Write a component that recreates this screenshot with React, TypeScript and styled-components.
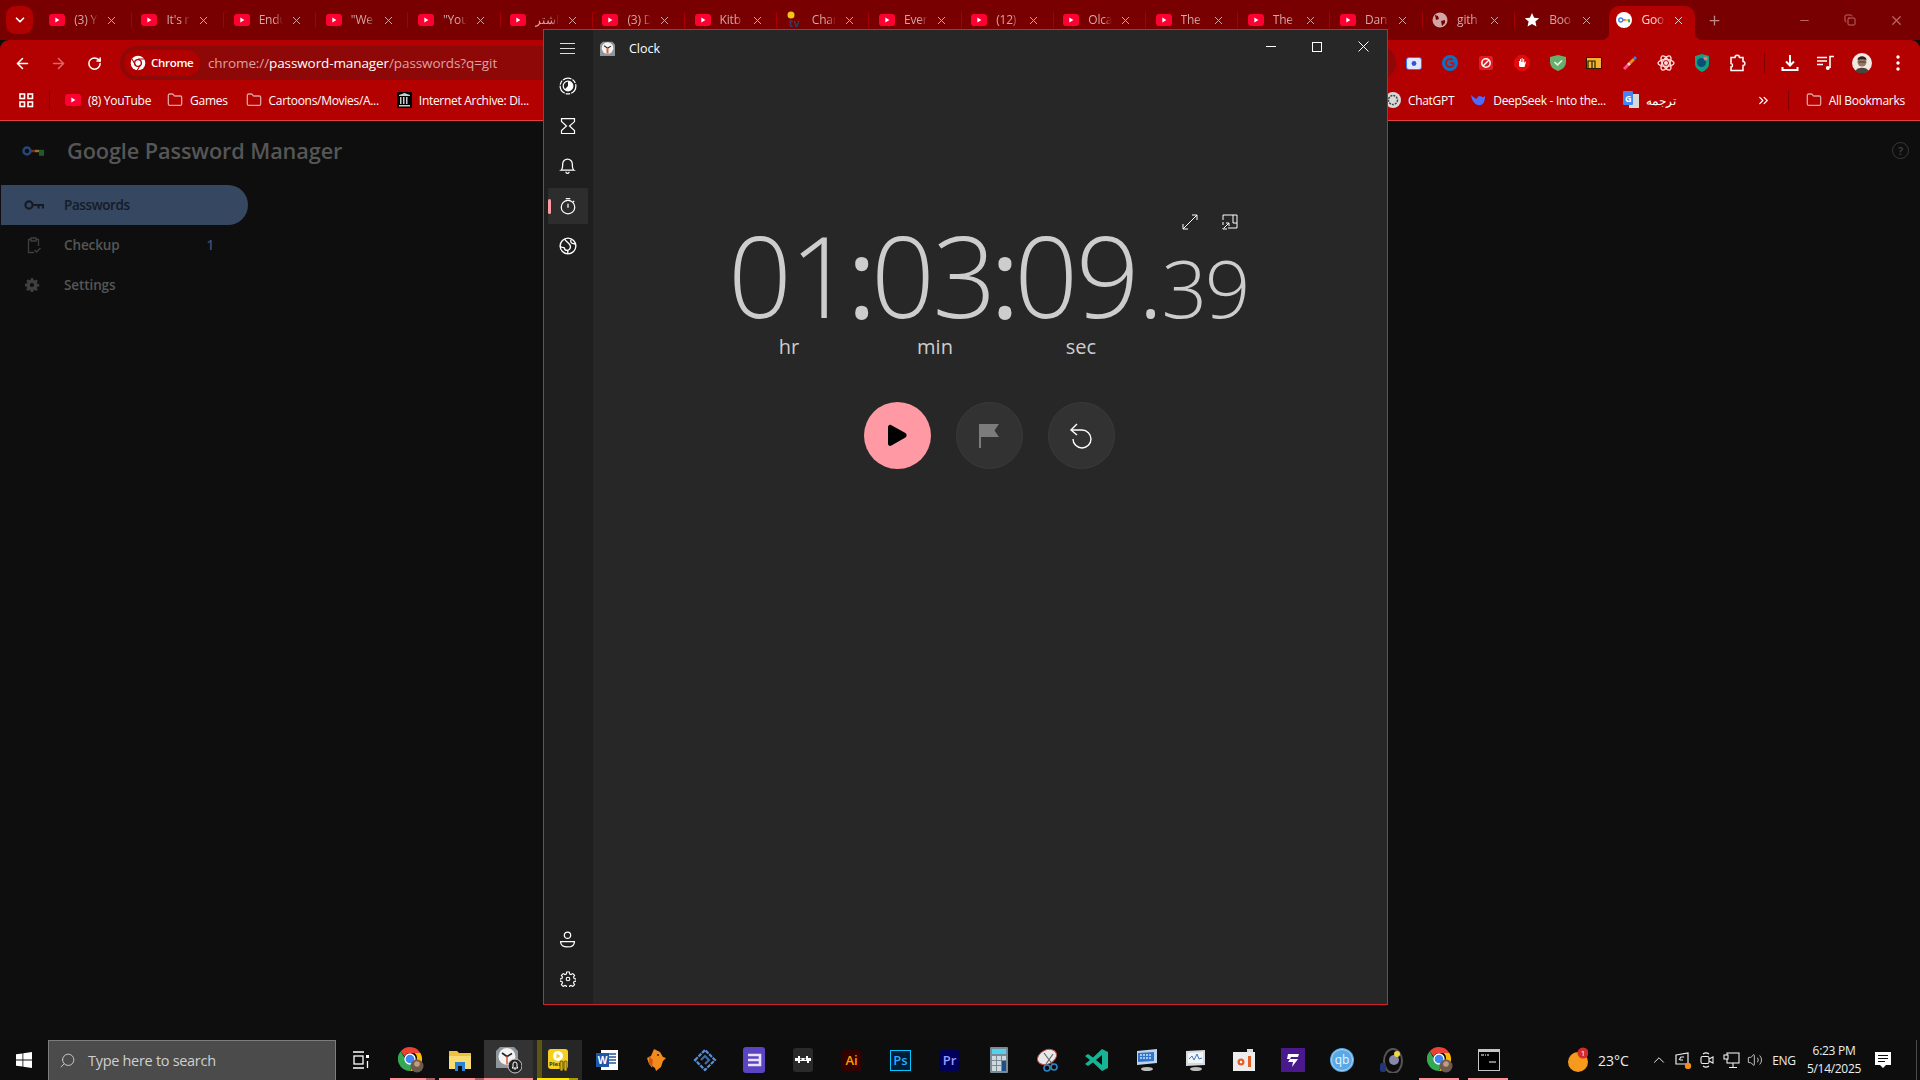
import React from "react";
import styled, { createGlobalStyle } from "styled-components";
import { ArrowLeft, ArrowRight, RotateCw, Folder, Search, ChevronDown, ChevronUp, X, Plus, Minus, Copy, ChevronsRight, Volume2 } from "lucide-react";

const Global = createGlobalStyle`
  html, body { margin: 0; padding: 0; background: #0e0e0e; }
  * { box-sizing: border-box; }
  body { font-family: "Open Sans", "Noto Sans", sans-serif; overflow: hidden; }
`;

const Screen = styled.div`
  position: relative; width: 1920px; height: 1080px; display: flex; flex-direction: column; overflow: hidden; background: #0e0e0e;
`;
const TabStrip = styled.div`
  height: 40px; background: #780000; display: flex; align-items: flex-end; flex: none;
`;
const TabMenu = styled.div`
  width: 27px; height: 28px; margin: 0 6.2px 6px 6px; background: #b00000; border-radius: 9px; display: flex; align-items: center; justify-content: center; color: #fff;
`;
const Tab = styled.div<{ $active?: boolean; $sep?: boolean }>`
  position: relative; width: 86px; height: 34px; margin: 0 3.1px; padding: 0 10px 6px 7px; display: flex; align-items: center; flex: none;
  border-radius: 10px 10px 0 0; background: ${p => (p.$active ? "#b30000" : "transparent")};
  color: ${p => (p.$active ? "#f3dcdc" : "#d3a6a6")};
  &::after {
    content: ""; display: ${p => (p.$sep ? "block" : "none")}; position: absolute; right: -3.6px; top: 6px; width: 1px; height: 16px; background: #a80000;
  }
`;
const TabFoot = styled.span<{ $right?: boolean }>`
  position: absolute; bottom: 0; width: 8px; height: 8px; ${p => (p.$right ? "right: -8px" : "left: -8px")};
  background: radial-gradient(circle at ${p => (p.$right ? "100% 0" : "0 0")}, #780000 8px, #b30000 8.5px);
`;
const TabTitle = styled.span`
  flex: 1; margin: 0 7px 0 9px; overflow: hidden; white-space: nowrap; font-size: 12px; line-height: 16px; letter-spacing: -0.2px;
  -webkit-mask-image: linear-gradient(90deg, #000 65%, transparent 100%); mask-image: linear-gradient(90deg, #000 65%, transparent 100%);
`;
const NewTab = styled.div`
  width: 32px; height: 34px; padding-bottom: 6px; display: flex; align-items: center; justify-content: center; color: #c28a8a; flex: none;
`;
const WinControls = styled.div`
  margin-left: auto; margin-right: 1px; display: flex; height: 40px;
`;
const WinButton = styled.div`
  width: 46px; display: flex; align-items: center; justify-content: center; color: #b66;
`;
const Toolbar = styled.div`
  height: 40px; background: #b30000; border-radius: 9px 9px 0 0; display: flex; align-items: center; padding: 6px 4px 0; flex: none;
`;
const NavButton = styled.div<{ $dim?: boolean }>`
  width: 36px; height: 34px; display: flex; align-items: center; justify-content: center; color: ${p => (p.$dim ? "#d66a6a" : "#fff")}; flex: none;
`;
const Omnibox = styled.div`
  width: 1276px; height: 34px; margin-left: 8px; padding: 0 0 1px 4px; border-radius: 17px; background: #8f0808; display: flex; align-items: center; flex: none;
`;
const Chip = styled.div`
  height: 26px; width: 76px; border-radius: 13px; background: #b00000; display: flex; align-items: center; gap: 5px; padding-left: 6px; color: #fff; font-size: 11.5px; font-weight: 600; letter-spacing: -0.3px;
`;
const Url = styled.div`
  margin-left: 8px; font-size: 13.5px; color: #dca3a3; letter-spacing: -0.1px; white-space: nowrap;
  b { font-weight: 400; color: #fff; }
`;
const ExtButton = styled.div`
  width: 36px; height: 34px; display: flex; align-items: center; justify-content: center; flex: none;
`;
const ToolSep = styled.div`
  width: 16px; display: flex; justify-content: center; flex: none;
  &::before { content: ""; width: 1px; height: 20px; background: #7f0000; }
`;
const Bookmarks = styled.div`
  height: 41px; background: #b30000; border-bottom: 1px solid #e04040; display: flex; align-items: center; padding-left: 19px; color: #fff; font-size: 12px; flex: none; letter-spacing: -0.3px;
`;
const BarSep = styled.div<{ $space?: number }>`
  width: 1px; height: 20px; background: #7f0000; margin: 0 ${p => p.$space ?? 15}px; flex: none;
`;
const Mark = styled.div<{ $gap?: number }>`
  display: flex; align-items: center; gap: 7px; white-space: nowrap; margin-right: ${p => p.$gap ?? 18}px; flex: none; color: #fff;
`;
const FolderIcon = styled(Folder)`
  color: #dba0a0;
`;
const PageBody = styled.div`
  flex: 1; display: flex; flex-direction: column; background: #0e0e0e; min-height: 0;
`;
const PageHeader = styled.div`
  height: 59px; display: flex; align-items: center; padding: 0 11px 0 22px; flex: none;
`;
const PageTitle = styled.div`
  margin-left: 23px; color: #565656; font-size: 21.7px; font-weight: 600; letter-spacing: -0.1px;
`;
const HelpBadge = styled.div`
  margin-left: auto; width: 17px; height: 17px; border-radius: 50%; border: 1.5px solid #3a3a3a; color: #3a3a3a; font-size: 11px; font-weight: 700; display: flex; align-items: center; justify-content: center;
`;
const SideNav = styled.div`
  margin-top: 5px; display: flex; flex-direction: column; width: 248px;
`;
const NavItem = styled.div<{ $active?: boolean }>`
  height: 40px; margin-left: 1px; display: flex; align-items: center; padding-left: 23px; border-radius: 0 20px 20px 0;
  background: ${p => (p.$active ? "#354761" : "transparent")}; color: ${p => (p.$active ? "#161b24" : "#565656")};
  font-size: 13.5px; font-weight: 600; letter-spacing: ${p => (p.$active ? "-0.4px" : "-0.1px")};
`;
const NavLabel = styled.span`
  margin-left: 20px; flex: 1;
`;
const NavCount = styled.span`
  color: #3d4f75; margin-right: 34px;
`;
const Taskbar = styled.div`
  height: 40px; background: #0d0d0d; display: flex; align-items: stretch; flex: none; color: #fff;
`;
const StartButton = styled.div`
  width: 48px; display: flex; align-items: center; justify-content: center; flex: none;
`;
const SearchBox = styled.div`
  width: 288px; background: #4b4b4b; border: 1px solid #7d7d7d; border-bottom: none; display: flex; align-items: center; padding-left: 10px; color: #cfcfcf; font-size: 14.5px; flex: none; letter-spacing: -0.3px;
`;
const SearchHint = styled.span`
  margin-left: 12px;
`;
const TaskView = styled.div`
  width: 50px; display: flex; align-items: center; justify-content: center; flex: none;
`;
const AppSlot = styled.div<{ $bg?: string }>`
  position: relative; width: 49px; display: flex; align-items: center; justify-content: center; flex: none; background: ${p => p.$bg ?? "transparent"};
`;
const RunBar = styled.span<{ $color: string; $left?: number; $right?: number }>`
  position: absolute; bottom: 0; left: ${p => p.$left ?? 4}px; right: ${p => p.$right ?? 0}px; height: 2px; background: ${p => p.$color};
`;
const LeftEdge = styled.span`
  position: absolute; top: 0; bottom: 0; left: 4px; width: 5px; background: #5b5712;
`;
const Weather = styled.div`
  margin-left: 55px; width: 79px; display: flex; align-items: center; gap: 10px; font-size: 14px; flex: none; color: #eee;
`;
const TrayIcon = styled.div`
  width: 24px; display: flex; align-items: center; justify-content: center; flex: none; color: #eee;
`;
const Lang = styled.div`
  width: 34px; display: flex; align-items: center; justify-content: center; font-size: 12px; flex: none; color: #eee; letter-spacing: -0.3px;
`;
const DateTime = styled.div`
  width: 66px; display: flex; flex-direction: column; align-items: center; justify-content: center; font-size: 12px; line-height: 18px; color: #eee; flex: none; letter-spacing: -0.3px;
`;
const Notify = styled.div`
  width: 32px; display: flex; align-items: center; justify-content: center; flex: none;
`;
const DesktopPeek = styled.div`
  width: 1px; margin-left: 17px; background: #4a4a4a; flex: none;
`;

const ClockWindow = styled.div`
  position: absolute; left: 543px; top: 29px; width: 845px; height: 976px; border: 1px solid #d3212d; display: flex; background: #272727;
`;
const ClockRail = styled.div`
  width: 49px; background: #1f1f1f; display: flex; flex-direction: column; align-items: center; flex: none;
`;
const RailItem = styled.div<{ $active?: boolean; $first?: boolean; $last?: boolean }>`
  position: relative; width: 40px; height: ${p => (p.$first ? "36px" : "40px")}; margin: 0 2px ${p => (p.$last ? "5px" : "0")} 0; display: flex; align-items: center; justify-content: center; color: #fff;
  ${p => (p.$active ? "background: linear-gradient(#2d2d2d,#2d2d2d) center/100% 36px no-repeat; border-radius: 4px;" : "")}
`;
const RailMark = styled.span`
  position: absolute; left: 0; top: 13px; width: 3px; height: 15px; border-radius: 2px; background: #ff99a4;
`;
const RailSpacer = styled.div`
  flex: 1;
`;
const ClockMain = styled.div`
  flex: 1; display: flex; flex-direction: column; min-width: 0;
`;
const TitleBar = styled.div`
  height: 36px; display: flex; align-items: center; padding-left: 7px; flex: none; color: #fff; font-size: 12.5px;
`;
const TitleText = styled.span`
  margin-left: 14px;
`;
const TitleControls = styled.div`
  margin-left: auto; display: flex; margin-right: 1px; padding-bottom: 3px;
`;
const TitleBtn = styled.div`
  width: 46px; display: flex; align-items: center; justify-content: center; color: #fff;
`;
const OverlayRow = styled.div`
  margin-top: 148px; height: 17px; display: flex; justify-content: flex-end; gap: 24px; padding-right: 149px; color: #fff; flex: none;
`;
const TimeRow = styled.div`
  display: flex; align-items: baseline; padding-left: 135px; height: 88px; line-height: 88px; color: #cdcdcd; font-size: 112px; font-weight: 300; flex: none; white-space: nowrap; letter-spacing: -2.4px;
`;
const TimeSep = styled.span`
  font-weight: 400; margin: 0 -3px 0 -4px;
`;
const TimeSmall = styled.span`
  font-size: 80px; letter-spacing: -2.5px;
`;
const UnitRow = styled.div`
  display: flex; padding-left: 123px; margin-top: 14px; flex: none;
`;
const Unit = styled.div`
  width: 146px; text-align: center; color: #cdcdcd; font-size: 20px; line-height: 28px;
`;
const Controls = styled.div`
  display: flex; justify-content: center; align-items: center; gap: 25px; margin-top: 41px; padding-right: 2px; flex: none;
`;
const RoundButton = styled.div<{ $primary?: boolean; $dim?: boolean }>`
  width: 67px; height: 67px; border-radius: 50%; display: flex; align-items: center; justify-content: center;
  background: ${p => (p.$primary ? "#ff99a4" : "#323232")}; border: ${p => (p.$primary ? "none" : "1.5px solid #3a3a3a")};
  color: ${p => (p.$primary ? "#000" : p.$dim ? "#7c7c7c" : "#fff")};
`;

const YT = () => (
  <svg width="16" height="12" viewBox="0 0 16 12"><rect width="16" height="12" rx="3" fill="#ff0033" /><path d="M6.3 3.6v4.8L10.4 6z" fill="#fff" /></svg>
);
const ChromeLogo = () => (
  <svg width="16" height="16" viewBox="0 0 24 24">
    <circle cx="12" cy="12" r="11" fill="#fff" /><circle cx="12" cy="12" r="6" fill="#b00000" /><circle cx="12" cy="12" r="4" fill="#fff" /><path d="M12 6h10M8 15L3 6M15.5 15l-5 8.5" stroke="#b00000" strokeWidth="1.6" />
  </svg>
);
const KeyFav = () => (
  <svg width="16" height="16" viewBox="0 0 16 16"><circle cx="8" cy="8" r="8" fill="#fff" /><circle cx="4.8" cy="8" r="2" fill="none" stroke="#4285f4" strokeWidth="1.4" /><rect x="6.8" y="7.3" width="3" height="1.4" fill="#ea4335" /><rect x="9.8" y="7.3" width="2.2" height="1.4" fill="#fbbc05" /><rect x="12" y="7.3" width="2" height="3" fill="#34a853" /></svg>
);
const Favicon = ({ kind }: { kind: string }) => {
  if (kind === "yt") return <YT />;
  if (kind === "tv") return (
    <svg width="16" height="18" viewBox="0 0 16 18"><circle cx="4" cy="4" r="3.5" fill="#f2c318" /><text x="2" y="16" fontSize="11" fontFamily="Open Sans" fontWeight="700" fill="#2b3c5a">tv</text></svg>
  );
  if (kind === "globe") return (
    <svg width="16" height="16" viewBox="0 0 16 16"><circle cx="8" cy="8" r="7.5" fill="#d3a6a6" /><path d="M3 3l3 1 1 3-3 1zM9 9l4-1 0 3-3 3z" fill="#780000" /></svg>
  );
  if (kind === "star") return (
    <svg width="16" height="16" viewBox="0 0 24 24"><path d="M12 1.5l3.2 7 7.6.8-5.7 5.1 1.6 7.5L12 18l-6.7 3.9 1.6-7.5L1.2 9.3l7.6-.8z" fill="#fff" /></svg>
  );
  return <KeyFav />;
};

const tabs: [string, string][] = [
  ["yt", "(3) Y"], ["yt", "It's r"], ["yt", "Endu"], ["yt", "\"We"], ["yt", "\"You"], ["yt", "اشتر"], ["yt", "(3) D"], ["yt", "Kitb"], ["tv", "Char"],
  ["yt", "Ever"], ["yt", "(12)"], ["yt", "Olca"], ["yt", "The"], ["yt", "The"], ["yt", "Dan"], ["globe", "gith"], ["star", "Boo"], ["key", "Goo"],
];

const Stroke: React.FC<{ size?: number; w?: number; children: React.ReactNode }> = ({ size = 16, w = 1.2, children }) => (
  <svg width={size} height={size} viewBox="0 0 16 16" fill="none" stroke="currentColor" strokeWidth={w}>{children}</svg>
);

const exts = [
  <svg key="a" width="16" height="13" viewBox="0 0 16 13"><rect x=".5" y=".5" width="15" height="12" rx="2.5" fill="#dfe8ff" stroke="#2f7bff" /><circle cx="8" cy="6.5" r="2.4" fill="#3b4fd8" /></svg>,
  <svg key="b" width="16" height="16" viewBox="0 0 16 16"><circle cx="8" cy="8" r="8" fill="#0a72c4" /><path d="M12 8a4 4 0 1 1-1.4-3" fill="none" stroke="#c81010" strokeWidth="2" /><path d="M8 8h4" stroke="#c81010" strokeWidth="2" /></svg>,
  <svg key="c" width="14" height="14" viewBox="0 0 14 14"><rect width="14" height="14" rx="2" fill="#e11b22" /><circle cx="7" cy="7" r="4.2" fill="none" stroke="#fff" strokeWidth="1.5" /><path d="M4 10l6-6" stroke="#fff" strokeWidth="1.5" /></svg>,
  <svg key="d" width="16" height="16" viewBox="0 0 16 16"><path d="M5 0h6l5 5v6l-5 5H5l-5-5V5z" fill="#e10b0b" /><path d="M5 11V6h1V4h1v3h.6V3h1v4h.6V4h1v4l1-1.5.8.5L10.5 12H6z" fill="#fff" /></svg>,
  <svg key="e" width="16" height="16" viewBox="0 0 16 16"><path d="M8 0l8 2v5c0 4.500-3.500 7.500-8 9-4.500-1.500-8-4.500-8-9V2z" fill="#68ae6f" /><path d="M4.500 7l3 2.800L12 5.500" fill="none" stroke="#e4f5e6" strokeWidth="1.6" /></svg>,
  <svg key="f" width="16" height="12" viewBox="0 0 16 12"><rect x=".5" y=".5" width="15" height="11" fill="#f2b431" stroke="#2d1b00" /><path d="M2 11V4h7v7M6 4v7" fill="none" stroke="#2d1b00" strokeWidth="1.2" /></svg>,
  <svg key="g" width="14" height="14" viewBox="0 0 14 14" fill="none" strokeWidth="3"><path d="M1 13L5 9" stroke="#ff4f8b" /><path d="M5 9l2-2" stroke="#ffe0d0" /><path d="M7 7l4-4" stroke="#f08a24" /><path d="M11 3l2-2" stroke="#3a7bdc" /></svg>,
  <svg key="h" width="18" height="18" viewBox="0 0 18 18" fill="none" stroke="#ffd8d8" strokeWidth="1.4"><ellipse cx="9" cy="9" rx="8" ry="3.500" /><ellipse cx="9" cy="9" rx="8" ry="3.500" transform="rotate(60 9 9)" /><ellipse cx="9" cy="9" rx="8" ry="3.500" transform="rotate(120 9 9)" /><circle cx="9" cy="9" r="1.300" fill="#ffd8d8" /></svg>,
  <svg key="i" width="16" height="18" viewBox="0 0 16 18"><path d="M8 0l7 2v8c0 3.500-3 6-7 8-4-2-7-4.500-7-8V2z" fill="#12a085" /><circle cx="7.500" cy="8.500" r="4.500" fill="#0b4f78" /><circle cx="11.500" cy="4.500" r="2" fill="#ff6b6b" /></svg>,
  <svg key="j" width="18" height="18" viewBox="0 0 18 18" fill="none" stroke="#fff" strokeWidth="1.5"><path d="M2 3.500h4c0-3 4.500-3 4.500 0H14v4c2.500 0 2.500 4 0 4v5H2v-3.500c2 0 2-3.500 0-3.500z" /></svg>,
];
const tools = [
  <svg key="k" width="18" height="18" viewBox="0 0 18 18" fill="none" stroke="#fff" strokeWidth="2"><path d="M9 1v10M5 7.500L9 11.500l4-4M1.500 13v3h15v-3" /></svg>,
  <svg key="l" width="18" height="16" viewBox="0 0 18 16" fill="none" stroke="#fff" strokeWidth="1.6"><path d="M0 2.500h10M0 6h10M0 9.500h6M13 13V1.500h4" /><circle cx="10.800" cy="13" r="2" fill="#fff" stroke="none" /></svg>,
  <svg key="m" width="20" height="20" viewBox="0 0 20 20"><circle cx="10" cy="10" r="10" fill="#efe9e2" /><circle cx="10" cy="9" r="4.500" fill="#9a7860" /><path d="M3.500 18c1-4.500 12-4.500 13 0a10 10 0 0 1-13 0z" fill="#4a4440" /><path d="M5.500 7c0-5 9-5 9 0-2-1-7-1-9 0z" fill="#2a211c" /><path d="M6.500 9h7" stroke="#2a211c" strokeWidth=".8" /></svg>,
  <svg key="n" width="4" height="16" viewBox="0 0 4 16" fill="#fff"><circle cx="2" cy="2" r="1.700" /><circle cx="2" cy="8" r="1.700" /><circle cx="2" cy="14" r="1.700" /></svg>,
];

const Win = () => (
  <svg width="16" height="16" viewBox="0 0 16 16" fill="#fff"><path d="M0 2.300l6.500-.9v6.200H0zM7.300 1.300L16 0v7.600H7.300zM0 8.400h6.500v6.200L0 13.700zM7.300 8.400H16V16l-8.700-1.200z" /></svg>
);

const Glyph: React.FC<{ bg: string; fg: string; t: string; r?: number; border?: string }> = ({ bg, fg, t, r = 2, border }) => (
  <svg width="21" height="21" viewBox="0 0 21 21"><rect x=".5" y=".5" width="20" height="20" rx={r} fill={bg} stroke={border ?? bg} /><text x="10.500" y="15" textAnchor="middle" fontSize="13" fontWeight="600" fontFamily="Open Sans" fill={fg}>{t}</text></svg>
);
const TaskChrome = () => (
  <svg width="26" height="30" viewBox="0 0 26 30">
    <g transform="translate(0,2)">
      <path d="M12 0a12 12 0 0 1 10.400 6H12a6 6 0 0 0-5.400 3.400L2.700 4.300A12 12 0 0 1 12 0z" fill="#ea4335" />
      <path d="M22.400 6A12 12 0 0 1 12 24l5-8.600A6 6 0 0 0 16.500 6z" fill="#fbbc05" />
      <path d="M12 24A12 12 0 0 1 2.700 4.300L7.800 12.800A6 6 0 0 0 15 15.500z" fill="#34a853" />
      <circle cx="12" cy="12" r="5" fill="#4285f4" stroke="#fff" strokeWidth="1.300" />
    </g>
    <circle cx="19" cy="21" r="6.500" fill="#6d5b4e" /><circle cx="19" cy="19" r="2.800" fill="#c49b7e" />
  </svg>
);

function ClockFace({ badge, small }: { badge?: boolean; small?: boolean }) {
  return (
    <svg width={small ? 15 : 26} height={small ? 15 : 28} viewBox={small ? "0 0 22 22" : "0 0 26 28"}>
      <path d="M4 1h14l4 4v17H0V5z" fill="#8e959b" />
      <circle cx="11" cy="10.500" r="8.500" fill="#f3f3f3" />
      <path d="M11 10.500L6 7M11 10.500l5-3" stroke="#222" strokeWidth="1.600" />
      <path d="M11 10.500v8" stroke="#d8623a" strokeWidth={small ? 3 : 1.6} />
      {badge && <g><circle cx="19" cy="20" r="7" fill="#222" stroke="#ccc" /><path d="M16 22h6l-1-1v-3a2 2 0 0 0-4 0v3zM18 23h2" fill="none" stroke="#fff" /></g>}
    </svg>
  );
}

const pinkRun = "linear-gradient(90deg,#ff8f9b 80%,#a86069 80%)";
const apps: { el: React.ReactNode; run?: string; bg?: string; edge?: boolean; left?: number; right?: number }[] = [
  { el: <TaskChrome />, run: pinkRun },
  { el: <svg width="22" height="22" viewBox="0 0 22 22"><path d="M0 2h8l2 2h12v16H0z" fill="#f0c040" /><path d="M0 7h22v13H0z" fill="#f9dc72" /><rect x="6" y="13" width="10" height="9" fill="#2b82d9" /><rect x="9" y="17" width="4" height="5" fill="#0d0d0d" /></svg>, run: pinkRun },
  { el: <ClockFace badge />, run: "#ff8f9b", bg: "#333333", left: 0 },
  { el: <svg width="22" height="24" viewBox="0 0 22 24"><rect x="1" y="1" width="20" height="20" rx="3" fill="#f5cf1e" /><circle cx="11" cy="8" r="5" fill="#fff" /><path d="M9.500 5.500v5l4-2.500z" fill="#f5cf1e" /><text x="2" y="18" fontSize="6" fontWeight="700" fontFamily="Open Sans" fill="#333">Plex</text><rect x="13" y="13" width="3" height="10" rx="1" fill="#d8b000" stroke="#222" strokeWidth=".6" /><rect x="17" y="13" width="3" height="10" rx="1" fill="#d8b000" stroke="#222" strokeWidth=".6" /></svg>, run: "linear-gradient(90deg,#ffe600 78%,#a89a00 78%)", bg: "#262626", edge: true, right: 4 },
  { el: <svg width="22" height="22" viewBox="0 0 22 22"><rect x="5" y="1" width="17" height="20" fill="#fff" /><path d="M11 5h9M11 8h9M11 11h9M11 14h9" stroke="#2b579a" strokeWidth="1.400" /><rect y="4" width="13" height="14" fill="#1e56a8" /><text x="6.500" y="15" textAnchor="middle" fontSize="10" fontWeight="700" fontFamily="Open Sans" fill="#fff">W</text></svg> },
  { el: <svg width="20" height="24" viewBox="0 0 20 24"><path d="M8 1l6 3 3 5 3 1-3 3-2 6-5 4-1-3-6-4-2-6 4-2z" fill="#f28a1c" /><path d="M3 8l4 4-1 8-3-4z" fill="#d3541a" /><circle cx="12" cy="7" r="1" fill="#222" /></svg> },
  { el: <svg width="24" height="24" viewBox="0 0 24 24" fill="none" stroke="#5b8fd4" strokeWidth="2.200"><path d="M2 12L12 2l10 10-10 10z" strokeDasharray="4 1" /><path d="M8 12l4-4 4 4-4 4" stroke="#3e6cb0" /></svg> },
  { el: <svg width="22" height="26" viewBox="0 0 22 26"><rect width="22" height="26" rx="3" fill="#5b44c2" /><path d="M5 8h12v10H5M5 13h11" fill="none" stroke="#e8e2ff" strokeWidth="2.600" /></svg> },
  { el: <svg width="20" height="24" viewBox="0 0 20 24"><rect width="20" height="24" rx="3" fill="#2a2a2a" /><path d="M2 10h3V8h2v2h6V8h2v2h3v3h-2v2h-2v-2H7v2H5v-2H2zM7 10.500h1.500V12H7zM11.500 10.500H13V12h-1.500z" fill="#fff" fillRule="evenodd" /></svg> },
  { el: <Glyph bg="#330000" fg="#ff9a00" t="Ai" r={3} /> },
  { el: <Glyph bg="#001e36" fg="#31a8ff" t="Ps" r={0} border="#00c8ff" /> },
  { el: <Glyph bg="#00005b" fg="#9999ff" t="Pr" r={3} /> },
  { el: <svg width="18" height="26" viewBox="0 0 18 26"><rect width="18" height="26" rx="1" fill="#7a8a94" /><rect x="2" y="2" width="14" height="5" fill="#4fd3ee" /><g fill="#cfd8dc"><rect x="2" y="9" width="4" height="4" /><rect x="7" y="9" width="4" height="4" /><rect x="2" y="14" width="4" height="4" /><rect x="7" y="14" width="4" height="4" /><rect x="2" y="19" width="4" height="5" /><rect x="7" y="19" width="4" height="5" /><rect x="12" y="9" width="4" height="4" /></g><rect x="12" y="14" width="4" height="10" fill="#1f4f8a" /></svg> },
  { el: <svg width="24" height="24" viewBox="0 0 24 24"><ellipse cx="11" cy="9" rx="10" ry="7" transform="rotate(-25 11 9)" fill="#e8e8e8" stroke="#c64545" /><path d="M8 5l9 12M17 6l-7 10" stroke="#666" strokeWidth="1.200" /><circle cx="18" cy="19" r="3" fill="none" stroke="#2c86c7" strokeWidth="1.600" /><circle cx="11" cy="20" r="3" fill="none" stroke="#2c86c7" strokeWidth="1.600" /></svg> },
  { el: <svg width="24" height="24" viewBox="0 0 24 24"><path d="M17 1l6 3v16l-6 3-9-8.500L3 18l-3-2 5-4-5-4 3-2 5 3.500z" fill="#18b394" /><path d="M17 7v10l-6-5z" fill="#0d0d0d" /></svg> },
  { el: <svg width="24" height="24" viewBox="0 0 24 24"><path d="M3 3l20-2v14L3 17z" fill="#bcd4ec" /><path d="M4 5l16-1v9L4 14z" fill="#2f74c8" /><path d="M6 7h12M6 10h12" stroke="#cfe2f6" strokeDasharray="2 1" strokeWidth="1.500" /><ellipse cx="13" cy="21" rx="6" ry="2" fill="#bbb" /></svg> },
  { el: <svg width="24" height="24" viewBox="0 0 24 24"><path d="M3 3l19-1v15L3 18z" fill="#d6dade" /><path d="M5 5l15-1v11H5z" fill="#f3f5f7" /><path d="M6 11l3-3 2 4 3-6 2 5 3-1" fill="none" stroke="#3a7bc8" /><ellipse cx="13" cy="21" rx="6" ry="2" fill="#bbb" /></svg> },
  { el: <svg width="22" height="22" viewBox="0 0 22 22"><path d="M0 3h22v19H0z" fill="#ededed" /><path d="M14 0h6v3h-6z" fill="#ddd" /><circle cx="8" cy="13" r="3.500" fill="#e2612a" /><circle cx="8" cy="13" r="1.200" fill="#fff" /><rect x="15" y="7" width="3" height="11" fill="#e2612a" /></svg> },
  { el: <svg width="24" height="24" viewBox="0 0 24 24"><rect width="24" height="24" fill="#4a1a8c" /><path d="M7 6h11l-1 3H10l-1 2h8l-6 8 1-5H7l2-3H6z" fill="#fff" /></svg> },
  { el: <svg width="24" height="24" viewBox="0 0 24 24"><circle cx="12" cy="12" r="12" fill="#5aa9e6" /><circle cx="12" cy="12" r="10.500" fill="none" stroke="#bcdcf6" strokeWidth=".8" /><text x="12" y="16" textAnchor="middle" fontSize="12" fontFamily="Open Sans" fill="#e8f4ff">qb</text></svg> },
  { el: <svg width="24" height="26" viewBox="0 0 24 26"><ellipse cx="14" cy="14" rx="9" ry="12" fill="none" stroke="#555" strokeWidth="2" /><circle cx="15" cy="13" r="5" fill="#88a" /><circle cx="18" cy="7" r="3" fill="#f0d840" /><rect x="1" y="16" width="6" height="9" rx="2" fill="#23367a" /></svg> },
  { el: <TaskChrome />, run: "#ff8f9b", right: 5 },
  { el: <svg width="22" height="22" viewBox="0 0 22 22"><rect width="22" height="22" fill="#c4c4c4" /><rect x="1" y="3" width="20" height="18" fill="#000" /><path d="M3 6h3M7 6h1M9 6h2M11 13h7" stroke="#fff" /></svg>, run: "#ff8f9b", right: 5 },
];

export default function App() {
  return (
    <Screen>
      <Global />
      <TabStrip>
        <TabMenu><ChevronDown size={14} strokeWidth={3} /></TabMenu>
        {tabs.map(([f, t], i) => (
          <Tab key={i} $active={i === 17} $sep={i < 16}>
            {i === 17 && <TabFoot />}
            {i === 17 && <TabFoot $right />}
            <Favicon kind={f} />
            <TabTitle>{t}</TabTitle>
            <X size={13} strokeWidth={1.8} />
          </Tab>
        ))}
        <NewTab><Plus size={15} /></NewTab>
        <WinControls>
          <WinButton><Minus size={13} /></WinButton>
          <WinButton><Copy size={12} /></WinButton>
          <WinButton><X size={15} /></WinButton>
        </WinControls>
      </TabStrip>
      <Toolbar>
        <NavButton><ArrowLeft size={17} strokeWidth={2.2} /></NavButton>
        <NavButton $dim><ArrowRight size={17} strokeWidth={2.2} /></NavButton>
        <NavButton><RotateCw size={15} strokeWidth={2.4} /></NavButton>
        <Omnibox>
          <Chip><ChromeLogo />Chrome</Chip>
          <Url>chrome://<b>password-manager</b>/passwords?q=git</Url>
        </Omnibox>
        {exts.map((e, i) => <ExtButton key={i}>{e}</ExtButton>)}
        <ToolSep />
        {tools.map((e, i) => <ExtButton key={i}>{e}</ExtButton>)}
      </Toolbar>
      <Bookmarks>
        <svg width="15" height="15" viewBox="0 0 15 15" fill="none" stroke="#fff" strokeWidth="1.600"><rect x="1" y="1" width="4.500" height="4.500" /><rect x="9" y="1" width="4.500" height="4.500" /><rect x="1" y="9" width="4.500" height="4.500" /><rect x="9" y="9" width="4.500" height="4.500" /></svg>
        <BarSep />
        <Mark $gap={16}><YT />(8) YouTube</Mark>
        <Mark><FolderIcon size={16} />Games</Mark>
        <Mark><FolderIcon size={16} />Cartoons/Movies/A...</Mark>
        <Mark $gap={856}>
          <svg width="15" height="16" viewBox="0 0 15 16"><rect width="15" height="16" fill="#000" /><path d="M2 3l5.500-2L13 3v1H2zM3 5h1.500v7H3zM6 5h1.500v7H6zM9 5h1.500v7H9zM2 13h11v1.500H2z" fill="#ccc" /></svg>
          Internet Archive: Di...
        </Mark>
        <Mark $gap={16}>
          <svg width="16" height="16" viewBox="0 0 16 16"><circle cx="8" cy="8" r="8" fill="#d8d8d8" /><circle cx="8" cy="8" r="4.500" fill="none" stroke="#444" strokeWidth="1.500" strokeDasharray="2 1" /></svg>
          ChatGPT
        </Mark>
        <Mark $gap={17}>
          <svg width="16" height="14" viewBox="0 0 16 14"><path d="M1 2c1 7 5 11 10 10 3-1 4-5 4-9-1 1-2 1-3 1-2-2-5-1-5 2-2-1-4-2-6-4z" fill="#4d6bfe" /></svg>
          DeepSeek - Into the...
        </Mark>
        <Mark $gap={80}>
          <svg width="16" height="18" viewBox="0 0 16 18"><rect x="6" y="3" width="10" height="14" fill="#d8d8d8" /><rect width="10" height="14" rx="1" fill="#4285f4" /><text x="5" y="11" textAnchor="middle" fontSize="9" fontWeight="700" fontFamily="Open Sans" fill="#fff">G</text></svg>
          <span dir="rtl">ترجمه</span>
        </Mark>
        <ChevronsRight size={15} strokeWidth={2} />
        <BarSep $space={17} />
        <Mark $gap={0}><FolderIcon size={16} />All Bookmarks</Mark>
      </Bookmarks>
      <PageBody>
        <PageHeader>
          <svg width="22" height="12" viewBox="0 0 22 12" fill="none"><circle cx="5" cy="6" r="3.500" stroke="#27477c" strokeWidth="2.400" /><rect x="9" y="4.800" width="4" height="2.400" fill="#7a2a22" /><rect x="13" y="4.800" width="4" height="2.400" fill="#8a7a18" /><rect x="17" y="4.800" width="5" height="6" fill="#1e5a2c" /></svg>
          <PageTitle>Google Password Manager</PageTitle>
          <HelpBadge>?</HelpBadge>
        </PageHeader>
        <SideNav>
          <NavItem $active>
            <svg width="20" height="12" viewBox="0 0 20 12" fill="none" stroke="#161b24" strokeWidth="2.200"><circle cx="5" cy="6" r="3.600" /><path d="M9 6h10v3.500M14.500 6v3.500" /></svg>
            <NavLabel>Passwords</NavLabel>
          </NavItem>
          <NavItem>
            <svg width="20" height="17" viewBox="0 0 20 17" fill="none" stroke="#3f3f3f" strokeWidth="1.300"><path d="M7 2.500H4.500v13H10M12 2.500h2.500V9M7 1h5v3H7zM10.500 13l2 2 4-4" /></svg>
            <NavLabel>Checkup</NavLabel>
            <NavCount>1</NavCount>
          </NavItem>
          <NavItem>
            <svg width="20" height="14" viewBox="-1.100 0 22.860 16"><path d="M6.700 0h2.600l.4 2.200 1.300.6 1.900-1.200 1.800 1.800-1.200 1.900.6 1.300 2.200.4v2.600l-2.200.4-.6 1.300 1.200 1.900-1.800 1.800-1.900-1.200-1.300.6-.4 2.200H6.700l-.4-2.200-1.300-.6-1.900 1.200-1.800-1.800 1.200-1.900-.6-1.300L0 9.300V6.700l2.200-.4.6-1.300-1.200-1.900 1.800-1.800 1.900 1.200 1.300-.6z" fill="#3f3f3f" /><circle cx="8" cy="8" r="2.400" fill="#0e0e0e" /></svg>
            <NavLabel>Settings</NavLabel>
          </NavItem>
        </SideNav>
      </PageBody>
      <Taskbar>
        <StartButton><Win /></StartButton>
        <SearchBox><Search size={17} strokeWidth={1.3} style={{ transform: "scaleX(-1)" }} /><SearchHint>Type here to search</SearchHint></SearchBox>
        <TaskView>
          <svg width="16" height="18" viewBox="0 0 16 18" fill="none" stroke="#fff" strokeWidth="1.300"><path d="M0 1h11M0 17h11" /><rect x="1" y="5" width="9" height="8" /><rect x="13" y="4" width="3" height="3" fill="#fff" stroke="none" /><path d="M14.500 10v7" /></svg>
        </TaskView>
        {apps.map((a, i) => (
          <AppSlot key={i} $bg={a.bg}>
            {a.edge && <LeftEdge />}
            {a.el}
            {a.run && <RunBar $color={a.run} $left={a.left} $right={a.right} />}
          </AppSlot>
        ))}
        <Weather>
          <svg width="20" height="26" viewBox="0 0 20 26"><circle cx="10" cy="15" r="10" fill="#f59a1d" /><circle cx="15" cy="6" r="5.500" fill="#d42b2b" /><text x="15" y="9" textAnchor="middle" fontSize="8" fontFamily="Open Sans" fill="#fff">1</text></svg>
          23°C
        </Weather>
        <TrayIcon><ChevronUp size={18} strokeWidth={1.3} /></TrayIcon>
        <TrayIcon>
          <svg width="18" height="18" viewBox="0 0 18 18" fill="none" stroke="#eee" strokeWidth="1.200"><path d="M2 4l12-2v11H2z" /><path d="M5 9l2-3h3M9 9H6" /><circle cx="14" cy="15" r="3.200" fill="#f28c1c" stroke="none" /></svg>
        </TrayIcon>
        <TrayIcon>
          <svg width="14" height="18" viewBox="0 0 14 18" fill="none" stroke="#eee" strokeWidth="1.100"><rect x="1" y="5.500" width="8" height="7" rx="1.500" /><path d="M9 8l4-2v6l-4-2M3 3c2-1.500 4-1.500 6 0M3 15c2 1.500 4 1.500 6 0" /></svg>
        </TrayIcon>
        <TrayIcon>
          <svg width="17" height="17" viewBox="0 0 17 17" fill="none" stroke="#eee" strokeWidth="1.100"><rect x="4" y="1" width="12" height="10" /><rect x="1" y="3" width="4" height="4" fill="#0d0d0d" /><path d="M10 11v4M6 15.500h8" /></svg>
        </TrayIcon>
        <TrayIcon><Volume2 size={16} strokeWidth={1.2} /></TrayIcon>
        <Lang>ENG</Lang>
        <DateTime><span>6:23 PM</span><span>5/14/2025</span></DateTime>
        <Notify>
          <svg width="16" height="17" viewBox="0 0 16 17"><path d="M0 0h16v13h-5l-3 3-3-3H0z" fill="#fff" /><path d="M3 3.500h10M3 6.500h10M3 9.500h7" stroke="#0d0d0d" /></svg>
        </Notify>
        <DesktopPeek />
      </Taskbar>

      <ClockWindow>
        <ClockRail>
          <RailItem $first>
            <svg width="15" height="11" viewBox="0 0 15 11" stroke="#ddd" strokeWidth="1"><path d="M0 .5h15M0 5.500h15M0 10.500h15" /></svg>
          </RailItem>
          <RailItem>
            <Stroke size={18} w={1.1}><circle cx="8" cy="8" r="7" strokeDasharray="8 1 4 1" /><circle cx="8" cy="8" r="4.300" /><path d="M8 8V3.700A4.300 4.300 0 1 1 5 11z" fill="currentColor" stroke="none" /></Stroke>
          </RailItem>
          <RailItem>
            <Stroke size={16} w={1.2}><path d="M1.500 .6h13v3L9.500 8l5 4.500v3h-13v-3L6.500 8l-5-4.500z" /></Stroke>
          </RailItem>
          <RailItem>
            <Stroke size={17} w={1.2}><path d="M2 11.500c1.500-1 1.500-2 1.500-6a4.500 4.500 0 0 1 9 0c0 4 0 5 1.500 6zM6.500 13a1.500 1.500 0 0 0 3 0" /></Stroke>
          </RailItem>
          <RailItem $active>
            <RailMark />
            <Stroke size={18} w={1.1}><circle cx="8" cy="9" r="6" /><path d="M6 1.500h4M8 6v3.500M12.500 3.500l1 1" /></Stroke>
          </RailItem>
          <RailItem>
            <Stroke size={18} w={1.2}><circle cx="8" cy="8" r="7" /><path d="M5 1.800c1 2.500 4 3 5 6 .6 1.700-.5 3.200-2 4-2 .5-3-.7-3.500-2.300-1.500 0-3-.6-3.500-1.500M11 2c-1 1.500-.7 3 .8 3.700l3 .5M8 15c-.5-1-.3-2 0-3" /></Stroke>
          </RailItem>
          <RailSpacer />
          <RailItem>
            <Stroke size={17} w={1.2}><circle cx="8" cy="4" r="3" /><path d="M1.500 10h13c0 3.500-2.500 5-6.500 5s-6.500-1.500-6.500-5z" /></Stroke>
          </RailItem>
          <RailItem $last>
            <Stroke size={16} w={1.1}><path d="M6.700 1h2.600l.4 2 1.300.6 1.800-1 1.800 1.800-1.100 1.700.6 1.400 2 .4v2.200l-2 .4-.6 1.400 1.100 1.700-1.800 1.800-1.800-1-1.300.6-.4 2H6.700l-.4-2-1.300-.6-1.800 1-1.800-1.800 1.100-1.700-.6-1.400-2-.4V7.900l2-.4.6-1.400-1.100-1.700 1.800-1.800 1.800 1 1.300-.6z" /><circle cx="8" cy="8" r="1.800" /></Stroke>
          </RailItem>
        </ClockRail>
        <ClockMain>
          <TitleBar>
            <ClockFace small />
            <TitleText>Clock</TitleText>
            <TitleControls>
              <TitleBtn><svg width="10" height="1" viewBox="0 0 10 1"><rect width="10" height="1" fill="#fff" /></svg></TitleBtn>
              <TitleBtn><svg width="10" height="10" viewBox="0 0 10 10"><rect x=".5" y=".5" width="9" height="9" fill="none" stroke="#fff" /></svg></TitleBtn>
              <TitleBtn><svg width="11" height="11" viewBox="0 0 11 11" stroke="#fff"><path d="M.5 .5l10 10M10.500 .5l-10 10" /></svg></TitleBtn>
            </TitleControls>
          </TitleBar>
          <OverlayRow>
            <Stroke size={16} w={1}><path d="M1 10v5h5M15 6V1h-5M1 15L15 1" /></Stroke>
            <Stroke size={16} w={1}><path d="M6 1h9v13H6M1 6V1h5M11 1v8h4M1 8v3M1 14v1h4M2 14l5-5M4 9h3v3" /></Stroke>
          </OverlayRow>
          <TimeRow>01<TimeSep>:</TimeSep>03<TimeSep>:</TimeSep>09.<TimeSmall>39</TimeSmall></TimeRow>
          <UnitRow><Unit>hr</Unit><Unit>min</Unit><Unit>sec</Unit></UnitRow>
          <Controls>
            <RoundButton $primary>
              <svg width="20" height="23" viewBox="0 0 20 23"><path d="M1 3.200c0-2 1.800-3 3.400-2l14 7.800c1.600 1 1.600 3.600 0 4.600l-14 8c-1.600 1-3.400 0-3.400-2z" fill="#000" /></svg>
            </RoundButton>
            <RoundButton $dim>
              <svg width="20" height="24" viewBox="0 0 20 24"><path d="M0 0h20l-4.500 6.500L20 13H2v11H0z" fill="#7c7c7c" /></svg>
            </RoundButton>
            <RoundButton>
              <svg width="24" height="26" viewBox="0 0 24 26" fill="none" stroke="#fff" strokeWidth="1.400"><path d="M2 7h11a9 9 0 1 1-9 9" /><path d="M8 1L2 7l6 5" /></svg>
            </RoundButton>
          </Controls>
        </ClockMain>
      </ClockWindow>
    </Screen>
  );
}
